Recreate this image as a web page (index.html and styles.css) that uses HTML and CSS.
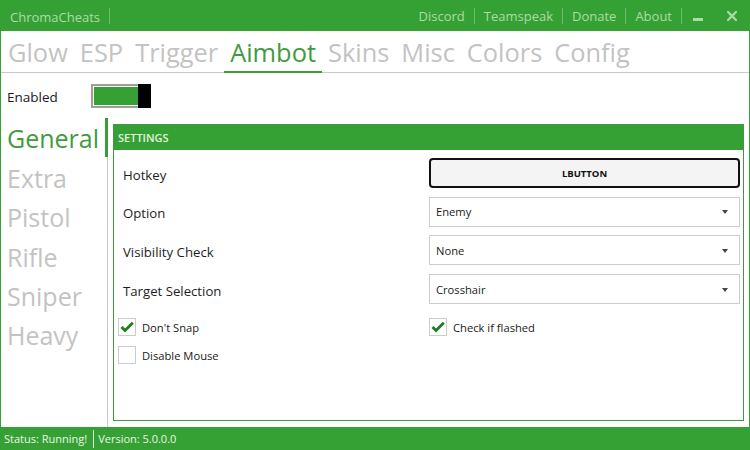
FILE: index.html
```html
<!DOCTYPE html>
<html>
<head>
<meta charset="utf-8">
<link rel="stylesheet" href="styles.css">
</head>
<body>
<div class="window">
  <header class="titlebar">
    <span class="ttext brand">ChromaCheats</span>
    <span class="tsep"></span>
    <nav class="links">
      <span class="ttext link">Discord</span>
      <span class="tsep"></span>
      <span class="ttext link">Teamspeak</span>
      <span class="tsep"></span>
      <span class="ttext link">Donate</span>
      <span class="tsep"></span>
      <span class="ttext link">About</span>
      <span class="tsep"></span>
    </nav>
    <span class="win-min"></span>
    <svg class="win-close" width="10" height="10" viewBox="0 0 10 10"><path d="M1 1 L9 9 M9 1 L1 9" stroke="#acdca4" stroke-width="2.2" stroke-linecap="square"/></svg>
  </header>

  <nav class="tabs">
    <span class="tab">Glow</span>
    <span class="tab">ESP</span>
    <span class="tab">Trigger</span>
    <span class="tab active">Aimbot</span>
    <span class="tab">Skins</span>
    <span class="tab">Misc</span>
    <span class="tab">Colors</span>
    <span class="tab">Config</span>
  </nav>

  <div class="enable-row">
    <span class="enable-label">Enabled</span>
    <span class="toggle"><span class="track"><span class="fill"></span></span><span class="thumb"></span></span>
  </div>

  <div class="main">
    <ul class="side">
      <li class="side-item active">General</li>
      <li class="side-item">Extra</li>
      <li class="side-item">Pistol</li>
      <li class="side-item">Rifle</li>
      <li class="side-item">Sniper</li>
      <li class="side-item">Heavy</li>
    </ul>

    <section class="panel">
      <div class="panel-head">SETTINGS</div>
      <div class="panel-body">
        <div class="rows">
          <div class="row"><span class="row-label">Hotkey</span><button class="hotkey">LBUTTON</button></div>
          <div class="row"><span class="row-label">Option</span><div class="select"><span>Enemy</span><svg width="6" height="4" viewBox="0 0 6 4"><path d="M0 0 H6 L3 4 Z" fill="#444"/></svg></div></div>
          <div class="row"><span class="row-label">Visibility Check</span><div class="select"><span>None</span><svg width="6" height="4" viewBox="0 0 6 4"><path d="M0 0 H6 L3 4 Z" fill="#444"/></svg></div></div>
          <div class="row"><span class="row-label">Target Selection</span><div class="select"><span>Crosshair</span><svg width="6" height="4" viewBox="0 0 6 4"><path d="M0 0 H6 L3 4 Z" fill="#444"/></svg></div></div>
        </div>
        <div class="checks">
          <label class="check"><span class="box"><svg width="16" height="16" viewBox="0 0 16 16"><path d="M2.5 8 L6 11.6 L13.8 3.8" fill="none" stroke="#1e7d1e" stroke-width="2.8"/></svg></span><span>Don't Snap</span></label>
          <label class="check"><span class="box"><svg width="16" height="16" viewBox="0 0 16 16"><path d="M2.5 8 L6 11.6 L13.8 3.8" fill="none" stroke="#1e7d1e" stroke-width="2.8"/></svg></span><span>Check if flashed</span></label>
          <label class="check"><span class="box"></span><span>Disable Mouse</span></label>
        </div>
      </div>
    </section>
  </div>

  <footer class="status">
    <span>Status: Running!</span>
    <span class="st-sep"></span>
    <span>Version: 5.0.0.0</span>
  </footer>
</div>
</body>
</html>
```

FILE: styles.css
```css
* { box-sizing: border-box; }
html, body { margin: 0; padding: 0; }
body {
  font-family: "Open Sans", "Noto Sans", sans-serif;
  background: #fff;
}
.window {
  width: 750px;
  height: 450px;
  display: flex;
  flex-direction: column;
  border-left: 1px solid #35a135;
  border-right: 1px solid #35a135;
  background: #fff;
  overflow: hidden;
}

/* title bar */
.titlebar {
  height: 31px;
  flex: none;
  background: #35a135;
  display: flex;
  align-items: center;
  padding-left: 9px;
  color: #acdca4;
  font-size: 13px;
}
.ttext { padding-top: 3px; line-height: 18px; }
.brand { margin-right: 9px; }
.tsep { width: 1px; height: 16px; background: #6dbb6b; }
.links { margin-left: auto; display: flex; align-items: center; }
.link { padding: 0 9px 0 9px; }
.win-min { width: 10px; height: 3px; background: #acdca4; margin-left: 11px; margin-top: 8px; }
.win-close { margin-left: 24px; margin-right: 12px; }

/* tabs */
.tabs {
  height: 42px;
  flex: none;
  display: flex;
  align-items: flex-start;
  padding: 4px 0 0 1px;
  border-bottom: 1px solid #c9c9c9;
}
.tab {
  font-size: 25.4px;
  line-height: 34px;
  height: 37px;
  padding: 0 6px;
  color: #c3c3c3;
}
.tab.active {
  color: #3f9b3f;
  height: 38px;
  margin-bottom: -1px;
  border-bottom: 2px solid #35a135;
}

/* enabled row */
.enable-row {
  height: 45px;
  flex: none;
  display: flex;
  align-items: center;
  padding-left: 6px;
}
.enable-label {
  width: 84px;
  font-size: 13.5px;
  color: #1a1a1a;
  padding-top: 3px;
}
.toggle { display: flex; height: 24px; }
.track {
  width: 47px;
  height: 24px;
  border: 2px solid #a39e94;
  border-right: none;
  padding: 1px 0 1px 1px;
  display: flex;
}
.fill { flex: 1; background: #35a135; }
.thumb { width: 13px; height: 24px; background: #000; }

/* main */
.main { flex: 1; display: flex; min-height: 0; }
.side {
  list-style: none;
  margin: 0;
  padding: 0;
  width: 107px;
  flex: none;
  border-right: 1px solid #c9c9c9;
}
.side-item {
  font-size: 25px;
  height: 39.4px;
  line-height: 37px;
  padding: 2.4px 0 0 6px;
  margin-right: -1px;
  color: #c3c3c3;
}
.side-item.active {
  color: #3f9b3f;
  box-shadow: inset -3px 0 0 #35a135;
}

.panel {
  flex: 1;
  margin: 6px 5px 6px 5px;
  border: 1px solid #3d9b3d;
  display: flex;
  flex-direction: column;
}
.panel-head {
  height: 25px;
  flex: none;
  background: #35a135;
  color: #e4f3de;
  font-size: 11px;
  font-weight: 600;
  line-height: 26px;
  padding-left: 4px;
}
.panel-body { padding: 8px 3px 0 9px; }
.rows { display: flex; flex-direction: column; gap: 8.7px; }
.row {
  display: grid;
  grid-template-columns: 306px 1fr;
  height: 30px;
  align-items: center;
}
.row-label {
  font-size: 13.2px;
  color: #1e1e1e;
  padding-top: 3px;
}
.hotkey {
  height: 30px;
  border: 2px solid #111;
  border-radius: 4px;
  background: #f4f4f4;
  font-family: "Open Sans", sans-serif;
  font-size: 9.5px;
  font-weight: 700;
  color: #111;
  padding: 0;
}
.select {
  height: 30px;
  border: 1px solid #cdcdcd;
  display: flex;
  align-items: center;
  justify-content: space-between;
  padding: 0 11px 0 6px;
  font-size: 11.2px;
  color: #1a1a1a;
}
.select svg { margin-top: 1px; }

.checks {
  display: grid;
  grid-template-columns: 311px 1fr;
  row-gap: 10px;
  margin: 14px 0 0 -5px;
}
.check {
  display: flex;
  align-items: center;
  gap: 6px;
  height: 18px;
  font-size: 11.2px;
  color: #1a1a1a;
}
.box {
  width: 18px;
  height: 18px;
  border: 1px solid #cccccc;
  display: flex;
  align-items: center;
  justify-content: center;
  background: #fff;
}

/* status */
.status {
  height: 23px;
  flex: none;
  background: #35a135;
  display: flex;
  align-items: center;
  padding-left: 3px;
  font-size: 11px;
  color: #eef6e0;
}
.st-sep { width: 1px; height: 18px; background: #d8ecd0; margin: 0 4px 0 6px; }
```
